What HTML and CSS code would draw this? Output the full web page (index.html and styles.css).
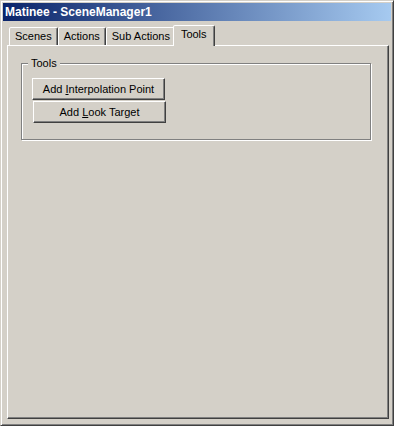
FILE: index.html
```html
<!DOCTYPE html>
<html lang="en">
<head>
    <meta charset="UTF-8">
    <meta name="viewport" content="width=device-width, initial-scale=1.0">
    <title>Matinee - SceneManager1</title>
    <link rel="stylesheet" href="styles.css">
</head>
<body>
    <div class="window">
        <div class="titlebar">Matinee - SceneManager1</div>

        <div class="client">
            <div class="tabs">
                <div class="tab">Scenes</div>
                <div class="tab">Actions</div>
                <div class="tab">Sub Actions</div>
                <div class="tab active">Tools</div>
            </div>

            <div class="panel">
                <fieldset class="group">
                    <legend>Tools</legend>
                    <button class="btn">Add <u>I</u>nterpolation Point</button>
                    <button class="btn second">Add <u>L</u>ook Target</button>
                </fieldset>
            </div>
        </div>
    </div>
</body>
</html>
```

FILE: styles.css
```css
:root {
    --face: #d4d0c8;
    --light: #ffffff;
    --shadow: #808080;
    --dark: #404040;
}

* {
    box-sizing: border-box;
}

body {
    margin: 0;
    background: var(--face);
    font-family: 'Liberation Sans', Arial, sans-serif;
    font-size: 11px;
    color: #000;
}

/* outer dialog frame */
.window {
    width: 394px;
    height: 426px;
    display: flex;
    flex-direction: column;
    padding: 2px;
    border: 1px solid;
    border-color: var(--face) var(--dark) var(--dark) var(--face);
    box-shadow: inset 1px 1px 0 var(--light), inset -1px -1px 0 var(--shadow);
}

.titlebar {
    height: 18px;
    line-height: 18px;
    padding-left: 2px;
    background: linear-gradient(to right, #0a246a, #a6caf0);
    color: #fff;
    font-size: 12px;
    font-weight: bold;
}

.client {
    flex: 1;
    display: flex;
    flex-direction: column;
    padding: 4px 2px 4px 4px;
}

/* tab strip */
.tabs {
    display: flex;
    align-items: flex-end;
    height: 20px;
    padding-left: 2px;
}

.tab {
    height: 18px;
    line-height: 17px;
    padding: 0 5px;
    border: 1px solid;
    border-bottom: none;
    border-color: var(--light) var(--dark) transparent var(--light);
    border-radius: 2px 2px 0 0;
    box-shadow: inset -1px 0 0 var(--shadow);
    background: var(--face);
    white-space: nowrap;
}

.tab.active {
    position: relative;
    z-index: 1;
    height: 21px;
    margin: 0 -2px -1px -3px;
    padding: 0 7px;
    line-height: 16px;
}

.panel {
    flex: 1;
    padding: 11px 15px 0 13px;
    border: 1px solid;
    border-color: var(--light) var(--dark) var(--dark) var(--light);
    box-shadow: inset -1px -1px 0 var(--shadow);
}

/* etched group box */
.group {
    width: 350px;
    margin: 0;
    padding: 0 0 16px 10px;
    border: 1px solid var(--shadow);
    box-shadow: 1px 1px 0 var(--light), inset 1px 1px 0 var(--light);
}

.group legend {
    margin-left: -4px;
    padding: 0 3px;
    line-height: 13px;
    background: var(--face);
}

.btn {
    display: block;
    width: 133px;
    height: 22px;
    margin-top: 8px;
    padding: 0;
    font: inherit;
    color: #000;
    text-align: center;
    background: var(--face);
    border: 1px solid;
    border-color: var(--light) var(--dark) var(--dark) var(--light);
    box-shadow: inset -1px -1px 0 var(--shadow);
}

.btn.second {
    margin-top: 1px;
    margin-left: 1px;
}
```
